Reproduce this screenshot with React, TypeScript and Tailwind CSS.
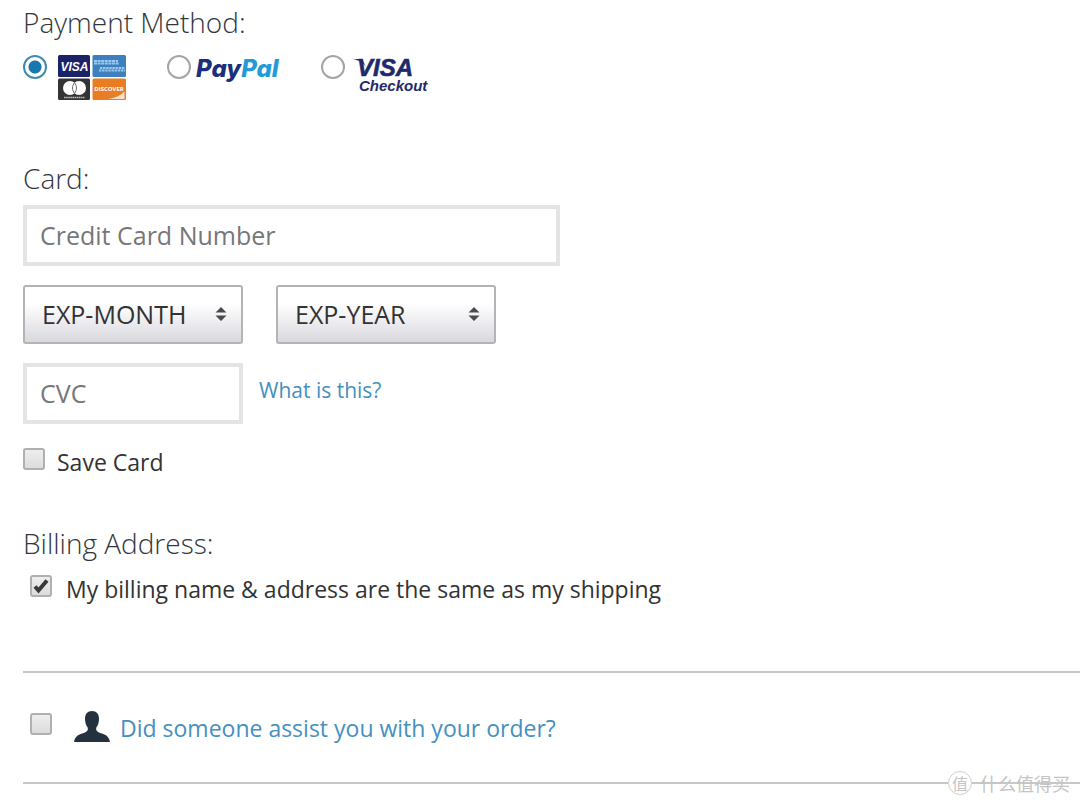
import React, { useState } from 'react';

type Method = 'card' | 'paypal' | 'visa';

const MONTHS = ['01', '02', '03', '04', '05', '06', '07', '08', '09', '10', '11', '12'];
const YEARS = ['2016', '2017', '2018', '2019', '2020', '2021', '2022'];

const CardLogos = () => (
  <svg viewBox="0 0 68 45" className="w-[68px] h-[45px]" aria-hidden="true">
    <rect width="32" height="22" rx="1.5" fill="#1c2267" />
    <text x="16.5" y="16" textAnchor="middle" fontFamily="Liberation Sans, sans-serif" fontWeight="700" fontStyle="italic" fontSize="12" fill="#fff">VISA</text>
    <rect x="34.5" width="33.5" height="22" rx="1.5" fill="#3d80bf" />
    <path d="M36 6h24M36 8.500h25" stroke="#9cc8ee" strokeWidth="2" strokeDasharray="3 0.6" />
    <path d="M42 13h25M41 15.500h26" stroke="#9cc8ee" strokeWidth="2" strokeDasharray="2.4 0.7" />
    <rect y="23.5" width="32" height="21.5" rx="1.5" fill="#333435" />
    <circle cx="12" cy="33" r="7" fill="#fff" />
    <circle cx="21" cy="33" r="7" fill="#fff" />
    <path d="M16.5 27.6c2.6 3.4 2.6 7.4 0 10.8c-2.6-3.4-2.6-7.4 0-10.8" fill="none" stroke="#555" strokeWidth="0.9" />
    <path d="M6 42.5h21" stroke="#bbb" strokeWidth="1.4" strokeDasharray="1.6 0.5" />
    <rect x="34.5" y="23.5" width="33.5" height="21.5" rx="1.5" fill="#e87d23" />
    <path d="M66.5 36.5v7.5H50c7-1 12.500-3.500 16.500-7.500" fill="#f7dfc8" />
    <text x="51" y="35.5" textAnchor="middle" fontFamily="Open Sans, sans-serif" fontWeight="700" fontSize="6" fill="#fff">DISCOVER</text>
  </svg>
);

const PayPalLogo = () => (
  <svg viewBox="0 0 92 36" className="w-[92px] h-9 overflow-visible" aria-hidden="true">
    <text x="1" y="22" fontFamily="Inter, sans-serif" fontWeight="800" fontStyle="italic" fontSize="24" fill="#1b2f7c">
      Pay<tspan fill="#229bd8">Pal</tspan>
    </text>
  </svg>
);

const VisaCheckoutLogo = () => (
  <svg viewBox="0 0 84 44" className="w-[84px] h-11 overflow-visible" aria-hidden="true">
    <path d="M0 4h9l4 8c-3-5-7-6.500-13-8" fill="#1e2a6b" />
    <text x="4" y="21" fontFamily="Liberation Sans, sans-serif" fontWeight="700" fontStyle="italic" fontSize="24" fill="#1e2a6b" stroke="#1e2a6b" strokeWidth="0.6">VISA</text>
    <text x="6" y="36" fontFamily="Liberation Sans, sans-serif" fontWeight="700" fontStyle="italic" fontSize="15" fill="#1e2a6b">Checkout</text>
  </svg>
);

const PersonIcon = () => (
  <svg viewBox="0 0 36 31" className="w-9 h-[31px]" aria-hidden="true">
    <path d="M18 0c4.500 0 7 3 7 7.500c0 3-.6 6.500-2.700 9c-.6 2.600.3 4 2.700 4.900c5 1.800 10 2.600 11 9.600H0c1-7 6-7.800 11-9.600c2.400-.9 3.300-2.300 2.700-4.900c-2.100-2.500-2.700-6-2.700-9C11 3 13.500 0 18 0" fill="#243240" />
  </svg>
);

interface RadioProps {
  value: Method;
  label: string;
  current: Method;
  onSelect: (m: Method) => void;
  children: React.ReactNode;
}

const MethodRadio: React.FC<RadioProps> = ({ value, label, current, onSelect, children }) => (
  <label className="flex items-start cursor-pointer">
    <input
      type="radio"
      name="method"
      aria-label={label}
      checked={current === value}
      onChange={() => onSelect(value)}
      className="appearance-none shrink-0 size-6 rounded-full border-2 border-[#a5a5a5] bg-white checked:border-[#4389b5] checked:bg-[radial-gradient(circle,#1878ae_6px,#fff_7px)]"
    />
    {children}
  </label>
);

interface CheckProps {
  id: string;
  label?: string;
  defaultChecked?: boolean;
}

const Check: React.FC<CheckProps> = ({ id, label, defaultChecked }) => (
  <span className="relative block size-[22px] shrink-0">
    <input
      id={id}
      type="checkbox"
      aria-label={label}
      defaultChecked={defaultChecked}
      className="peer appearance-none block size-[22px] rounded-[3px] border-2 border-[#b0b0b0] bg-linear-to-b from-[#eeeeee] to-[#dcdcdc]"
    />
    <svg viewBox="0 0 22 22" className="absolute inset-0 hidden peer-checked:block pointer-events-none">
      <path d="M5 11.500l3.500 4L17 5.500" fill="none" stroke="#3a3a3a" strokeWidth="4" />
    </svg>
  </span>
);

const ExpSelect: React.FC<{ label: string; options: string[] }> = ({ label, options }) => (
  <div className="relative w-[220px]">
    <select
      aria-label={label}
      className="appearance-none w-full h-[59px] pl-[17px] rounded-[3px] border-2 border-[#b4b4b6] bg-linear-to-b from-white from-30% to-[#d9d8de] text-[25px] text-[#333]"
    >
      <option>{label}</option>
      {options.map(o => <option key={o}>{o}</option>)}
    </select>
    <svg viewBox="0 0 12 16" className="absolute right-4 top-[21px] w-3 h-4 pointer-events-none">
      <path d="M6 1l5.500 5.500H.5zM6 15L.5 9.500h11z" fill="#4a4a4c" />
    </svg>
  </div>
);

const Heading: React.FC<{ children: React.ReactNode }> = ({ children }) => (
  <h2 className="text-[28px] leading-9 font-light text-[#33373c]">{children}</h2>
);

const inputClass = 'block h-[61px] px-[13px] pb-0.5 border-4 border-[#e4e4e4] bg-white text-[25px] text-[#333] placeholder:text-[#777] outline-none';

const App: React.FC = () => {
  const [method, setMethod] = useState<Method>('card');

  return (
    <main className="min-h-screen bg-white pl-[23px] pt-1 font-['Open_Sans',sans-serif] text-[#333]">
      <Heading>Payment Method:</Heading>
      <div className="flex items-start mt-[15px] h-[45px]">
        <div className="w-36">
          <MethodRadio value="card" label="Credit card" current={method} onSelect={setMethod}>
            <span className="ml-[11px]"><CardLogos /></span>
          </MethodRadio>
        </div>
        <div className="w-[154px]">
          <MethodRadio value="paypal" label="PayPal" current={method} onSelect={setMethod}>
            <span className="ml-1"><PayPalLogo /></span>
          </MethodRadio>
        </div>
        <MethodRadio value="visa" label="Visa Checkout" current={method} onSelect={setMethod}>
          <span className="ml-2"><VisaCheckoutLogo /></span>
        </MethodRadio>
      </div>

      {/* Card details */}
      <section className="mt-[60px]">
        <Heading>Card:</Heading>
        <input aria-label="Card number" placeholder="Credit Card Number" className={`${inputClass} mt-[9px] w-full max-w-[537px]`} />
        <div className="flex gap-[33px] mt-[19px]">
          <ExpSelect label="EXP-MONTH" options={MONTHS} />
          <ExpSelect label="EXP-YEAR" options={YEARS} />
        </div>
        <div className="flex items-center gap-4 mt-[19px]">
          <input aria-label="Security code" placeholder="CVC" className={`${inputClass} w-[220px]`} />
          <a href="#cvc" className="pb-2 text-[21px] leading-7 text-[#4590c0]">What is this?</a>
        </div>
        <div className="flex items-start gap-3 mt-6">
          <Check id="save" />
          <label htmlFor="save" className="text-[23px] leading-7">Save Card</label>
        </div>
      </section>

      <section className="mt-[49px]">
        <Heading>Billing Address:</Heading>
        <div className="flex items-start gap-[14px] mt-[14px] pl-[7px]">
          <Check id="same" defaultChecked />
          <label htmlFor="same" className="text-[23px] leading-7">My billing name &amp; address are the same as my shipping</label>
        </div>
      </section>

      <div className="flex items-center mt-[68px] h-[113px] pl-[7px] border-y-2 border-[#c8c8c8]">
        <span className="pb-2"><Check id="assist" label="Someone assisted me" /></span>
        <span className="ml-[22px] pb-0.5"><PersonIcon /></span>
        <a href="#assist" className="ml-[10px] text-[23px] leading-7 text-[#4590c0]">Did someone assist you with your order?</a>
      </div>

      {/* Site mark, straddles the bottom rule */}
      <div className="absolute right-[10px] top-[771px] flex items-center gap-2 font-['Noto_Sans_CJK_SC',sans-serif] text-[#c4c4c4]">
        <span className="flex size-6 items-center justify-center rounded-full border border-[#d0d0d0] bg-white text-base leading-none">值</span>
        <span className="text-lg leading-6">什么值得买</span>
      </div>
    </main>
  );
};

export default App;
